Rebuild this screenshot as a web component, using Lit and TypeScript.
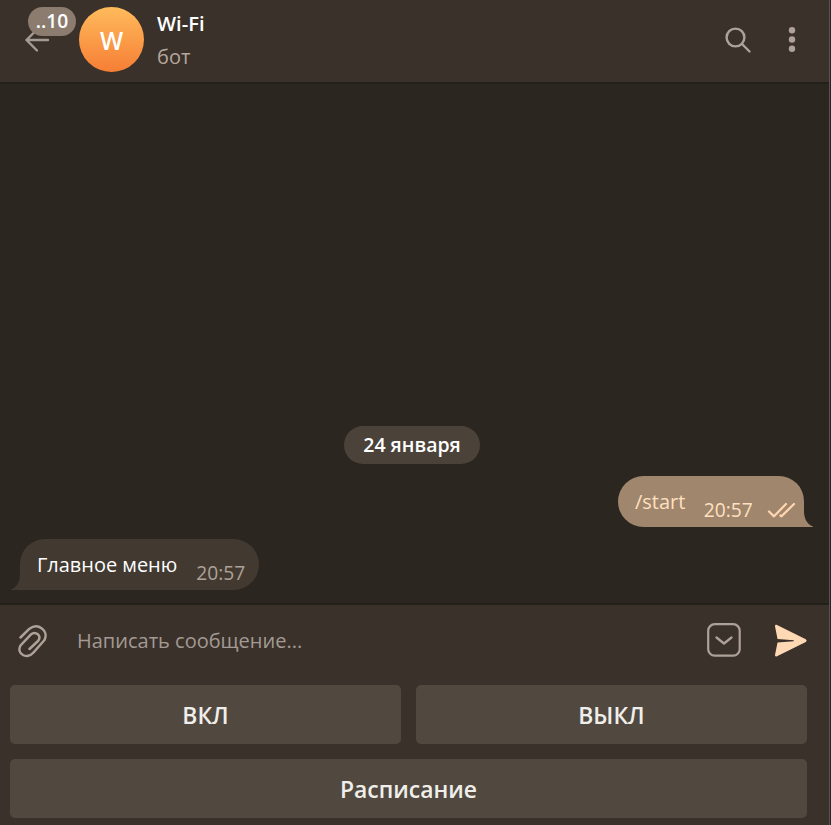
import { LitElement, html, css } from "lit";
import { customElement, property } from "lit/decorators.js";

@customElement("chat-message")
class ChatMessage extends LitElement {
  @property() text = "";
  @property() time = "";
  @property({ type: Boolean, reflect: true }) out = false;

  static styles = css`
    :host { display: block; position: relative; height: 51px; width: 248px; margin-left: 11px; color: #fff; }
    :host([out]) { width: 195px; margin-left: 618px; color: #ffe0c0; }
    .shape { position: absolute; inset: 0; display: block; }
    .body { position: relative; display: flex; height: 51px; box-sizing: border-box; padding-left: 26px; white-space: nowrap; }
    :host([out]) .body { padding-left: 17px; }
    .text { font-size: 19.95px; line-height: 27px; padding-top: 12px; }
    .time { font-size: 19.2px; line-height: 27px; padding-top: 20px; color: #aea198; margin-left: 19px; }
    :host([out]) .time { color: #ffe0c0; margin-left: 18.5px; }
    .ticks { margin: 25px 0 0 14px; }
  `;

  render() {
    return html`
      ${this.out
        ? html`<svg class="shape" width="195" height="51"><path fill="#9f866c" d="M25.500 0H161A25 25 0 0 1 186 25V35C186 42 188.500 48 195 50.500V51H25.500A25.500 25.500 0 0 1 25.500 0Z"/></svg>`
        : html`<svg class="shape" width="248" height="51"><path fill="#423a31" d="M222.500 0H34A25 25 0 0 0 9 25V35C9 42 6.500 48 0 50.500V51H222.500A25.500 25.500 0 0 0 222.500 0Z"/></svg>`}
      <div class="body">
        <span class="text">${this.text}</span>
        <span class="time">${this.time}</span>
        ${this.out
          ? html`<svg class="ticks" width="29" height="18" fill="none" stroke="#ffd5b0" stroke-width="2.300" stroke-linecap="round" stroke-linejoin="round"><path d="M2 10.500L7 15.300L19 3M13.500 14.500L14.500 15.300L27 3"/></svg>`
          : null}
      </div>
    `;
  }
}

@customElement("app-root")
class AppRoot extends LitElement {
  static styles = css`
    :host { display: block; width: 831px; height: 825px; overflow: hidden; font-family: "Open Sans", "Noto Sans", sans-serif; background: #2b2620; }
    .window { display: flex; flex-direction: column; width: 831px; height: 825px; box-sizing: border-box; border-right: 1px solid #25282a; }
    .inner { display: flex; flex-direction: column; flex: 1; min-height: 0; border-right: 1px solid #56524f; }
    .header { display: flex; flex: none; height: 82px; background: #3a312b; border-bottom: 2px solid #231f1a; }
    .back { position: relative; width: 79px; height: 82px; }
    .arrow { position: absolute; left: 24px; top: 27px; }
    .badge { position: absolute; left: 28px; top: 7px; width: 48px; height: 29px; border-radius: 15px; background: #8b7c6f; color: #fff; font-size: 19.2px; line-height: 28px; font-weight: 600; text-align: center; }
    .avatar { width: 65px; height: 65px; margin-top: 7px; border-radius: 50%; background: linear-gradient(#ffbb5c, #f67e35); color: #fff; font-size: 24.5px; line-height: 67px; text-align: center; font-weight: 600; }
    .peer { flex: 1; padding: 10px 0 0 13px; }
    .name { font-size: 20.2px; line-height: 27px; font-weight: 600; color: #fff; }
    .status { font-size: 20px; line-height: 27px; margin-top: 6px; color: #b5a79c; }
    .tools { display: flex; align-items: flex-start; }
    .search { margin: 26px 36px 0 0; }
    .more { margin: 26px 33px 0 0; }
    .chat { display: flex; flex-direction: column; flex: 1; justify-content: flex-end; gap: 12px; padding-bottom: 13px; background: #2b2620; }
    .date { width: 136px; height: 38px; margin-left: 344px; border-radius: 19px; background: #4b4239; color: #fff; font-size: 19.5px; line-height: 37px; font-weight: 600; text-align: center; white-space: nowrap; }
    .composer { display: flex; flex: none; height: 80px; box-sizing: border-box; background: #3a312b; border-top: 2px solid #231f1a; }
    .clip { margin: 19px 0 0 16px; }
    .field { flex: 1; padding: 22px 0 0 28px; font-size: 20px; line-height: 27px; color: #a39a93; }
    .keys { margin: 17px 32px 0 0; }
    .send { margin: 18px 21px 0 0; }
    .keyboard { display: grid; flex: none; grid-template-columns: 391px 391px; grid-auto-rows: 59px; gap: 15px; padding: 2px 0 7px 10px; background: #3a312b; }
    .key { border: 0; border-radius: 5px; padding: 2px 0 0; background: #51493f; color: #f0eeea; font-family: inherit; font-size: 22.9px; line-height: 57px; font-weight: 600; text-align: center; }
    .wide { grid-column: span 2; }
  `;

  render() {
    return html`
      <div class="window"><div class="inner">
        <div class="header">
          <div class="back">
            <svg class="arrow" width="28" height="26" fill="none" stroke="#a69b93" stroke-width="2.400" stroke-linecap="round" stroke-linejoin="round"><path d="M24 13H2.500M13 2.500L2.500 13L13 23.500"/></svg>
            <div class="badge">..10</div>
          </div>
          <div class="avatar">W</div>
          <div class="peer"><div class="name">Wi-Fi</div><div class="status">бот</div></div>
          <div class="tools">
            <svg class="search" width="28" height="28" fill="none" stroke="#aea198" stroke-width="2.400" stroke-linecap="round"><circle cx="11.500" cy="11.500" r="8.900"/><path d="M18 18L25.500 25.500"/></svg>
            <svg class="more" width="8" height="28" fill="#aea198"><circle cx="4" cy="4.200" r="3.200"/><circle cx="4" cy="13.500" r="3.200"/><circle cx="4" cy="22.800" r="3.200"/></svg>
          </div>
        </div>
        <div class="chat">
          <div class="date">24 января</div>
          <chat-message out text="/start" time="20:57"></chat-message>
          <chat-message text="Главное меню" time="20:57"></chat-message>
        </div>
        <div class="composer">
          <svg class="clip" width="33" height="36" fill="none" stroke="#aea198" stroke-width="2.500" stroke-linecap="round" stroke-linejoin="round"><path d="M4.500 13.500L13.500 4.700C22 -1.500 33 6.500 28.500 16L17.500 28.500C11 36 0 30 4.500 21.500L14.500 10.800C19.500 6.500 26.500 11.500 22 17L13.500 25"/></svg>
          <div class="field">Написать сообщение...</div>
          <svg class="keys" width="36" height="36" fill="none" stroke="#aea198" stroke-width="2.200" stroke-linecap="round" stroke-linejoin="round"><rect x="2.200" y="2.200" width="31.500" height="31.500" rx="6.500"/><path d="M10.500 15.500L18 21.500L25.500 15.500" stroke-width="2.300"/></svg>
          <svg class="send" width="34" height="35" fill="#ffd9b4"><path d="M1 3.200C.8 1.900 1.800 1.300 3 1.900L31.800 16.300Q33.600 17.700 31.800 19L3 33.200Q.7 33.900 1 32L3.500 19.600L19.800 18.200V17.200L3.500 15.900Z"/></svg>
        </div>
        <div class="keyboard">
          <button class="key">ВКЛ</button>
          <button class="key">ВЫКЛ</button>
          <button class="key wide">Расписание</button>
        </div>
      </div></div>
    `;
  }
}
